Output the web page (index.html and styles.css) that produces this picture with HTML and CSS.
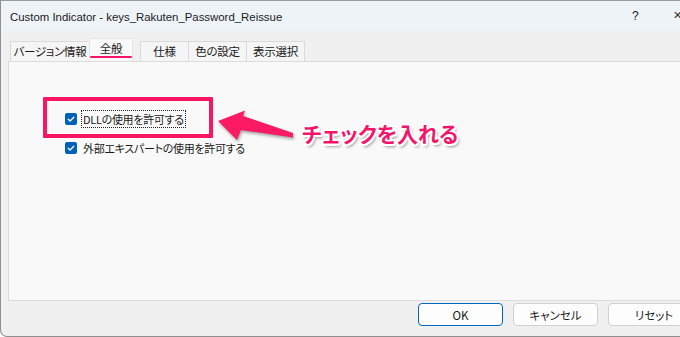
FILE: index.html
```html
<!DOCTYPE html>
<html lang="ja">
<head>
<meta charset="utf-8">
<title>Custom Indicator</title>
<link rel="stylesheet" href="styles.css">
</head>
<body>
<div class="window">
  <div class="titlebar">
    <span class="title">Custom Indicator - keys_Rakuten_Password_Reissue</span>
    <span class="help">?</span>
    <span class="close">✕</span>
  </div>
  <div class="client">
    <div class="tabs">
      <div class="tab t1">バージョン情報</div>
      <div class="tab active">全般<span class="underline"></span></div>
      <div class="tab t3">仕様</div>
      <div class="tab t4">色の設定</div>
      <div class="tab t5">表示選択</div>
    </div>
    <div class="panel">
      <label class="row">
        <span class="box"><svg viewBox="0 0 12 12"><path d="M3.2 6.2 L5.1 8 L8.8 4.2" fill="none" stroke="#fff" stroke-width="1.3" stroke-linecap="round" stroke-linejoin="round"/></svg></span>
        <span class="lbl focus">DLLの使用を許可する</span>
      </label>
      <label class="row">
        <span class="box"><svg viewBox="0 0 12 12"><path d="M3.2 6.2 L5.1 8 L8.8 4.2" fill="none" stroke="#fff" stroke-width="1.3" stroke-linecap="round" stroke-linejoin="round"/></svg></span>
        <span class="lbl">外部エキスパートの使用を許可する</span>
      </label>
    </div>
    <div class="buttons">
      <button class="btn default">OK</button>
      <button class="btn">キャンセル</button>
      <button class="btn">リセット</button>
    </div>
  </div>
  <div class="redbox"></div>
  <svg class="arrow" viewBox="212 104 88 42" width="88" height="42">
    <polygon points="218,121 245,110.5 243,116 293,133 293,137.5 241,130 237,140" fill="#fb1a63"/>
  </svg>
  <div class="note">チェックを入れる</div>
</div>
</body>
</html>
```
FILE: styles.css
```css
html, body {
  margin: 0;
  padding: 0;
  width: 680px;
  height: 337px;
  overflow: hidden;
  background: #ffffff;
}
.window {
  position: relative;
  width: 700px;
  height: 335px;
  border-top: 1px solid #9a9a9a;
  border-left: 1px solid #8f8f8f;
  border-bottom: 1px solid #8f8f8f;
  border-bottom-left-radius: 7px;
  background: #f0f0f0;
  overflow: hidden;
  font-family: "Noto Sans CJK JP", "Noto Sans", sans-serif;
  font-feature-settings: "palt";
  color: #1a1a1a;
}
.titlebar {
  height: 30px;
  background: #eef3f8;
  display: flex;
  align-items: center;
  position: relative;
}
.title {
  font-family: "Liberation Sans", "Noto Sans", sans-serif;
  font-size: 11.4px;
  margin-left: 9px;
  margin-top: 1px;
  color: #1b1b1b;
}
.help {
  position: absolute;
  left: 631px;
  top: 8px;
  font-family: "Liberation Sans", sans-serif;
  font-size: 12px;
}
.close {
  position: absolute;
  left: 672px;
  top: 8px;
  font-family: "DejaVu Sans", sans-serif;
  font-size: 11px;
  color: #333;
}
.client {
  padding-top: 8px;
}
.tabs {
  display: flex;
  align-items: flex-end;
  height: 22px;
  margin-left: 9px;
  position: relative;
  z-index: 1;
}
.tab {
  height: 19px;
  border: 1px solid #dadada;
  border-bottom: none;
  background: #f5f5f5;
  font-size: 11.5px;
  letter-spacing: -0.3px;
  line-height: 19px;
  color: #1a1a1a;
  text-align: center;
  white-space: nowrap;
  margin-right: -1px;
  flex: none;
}
.t1 { width: 78px; }
.tab.active {
  height: 22px;
  line-height: 19px;
  background: #f9f9f9;
  border-color: #e6e6e6;
  width: 42px;
  position: relative;
  margin-right: 7px;
}
.underline {
  position: absolute;
  left: 0;
  top: 17px;
  width: 42px;
  height: 2px;
  border-radius: 1px;
  background: #f5146a;
}
.t3 { width: 47px; }
.t4 { width: 57px; }
.t5 { width: 57px; }
.panel {
  margin-left: 7px;
  height: 240px;
  border: 1px solid #dcdcdc;
  background: #f9f9f9;
  padding: 48px 0 0 56px;
  box-sizing: border-box;
  display: flex;
  flex-direction: column;
  gap: 11px;
}
.row {
  display: flex;
  align-items: center;
  height: 18px;
  gap: 4px;
  font-size: 11px;
  letter-spacing: -0.3px;
}
.box {
  width: 12px;
  height: 12px;
  border-radius: 2px;
  background: #005fb8;
  display: flex;
}
.box svg { width: 12px; height: 12px; }
.lbl {
  line-height: 16px;
  padding: 0 1px;
  border: 1px solid transparent;
}
.lbl.focus {
  border: 1px dotted #222;
}
.buttons {
  display: flex;
  gap: 10px;
  margin: 2px 0 0 417px;
}
.btn {
  width: 85px;
  height: 23px;
  flex: none;
  border: 1px solid #d0d0d0;
  border-radius: 4px;
  background: #fdfdfd;
  font-family: "Noto Sans CJK JP", "Noto Sans", sans-serif;
  font-feature-settings: "palt";
  font-size: 11.5px;
  color: #1a1a1a;
  padding: 0;
}
.btn.default {
  border-color: #0067c0;
}
.btn:nth-child(3) { width: 92px; }
.redbox {
  position: absolute;
  left: 42px;
  top: 96px;
  width: 162px;
  height: 33px;
  border: 4px solid #fb1463;
  border-radius: 1px;
}
.arrow {
  position: absolute;
  left: 211px;
  top: 103px;
  filter: drop-shadow(1px 2px 1.5px rgba(0,0,0,0.35));
}
.note {
  position: absolute;
  left: 301px;
  top: 117px;
  font-family: "Noto Sans CJK JP", sans-serif;
  font-weight: 700;
  font-size: 21px;
  line-height: 30px;
  color: #f5146a;
  text-shadow:
    -1.5px -1.5px 0 #fff, 1.5px -1.5px 0 #fff, -1.5px 1.5px 0 #fff, 1.5px 1.5px 0 #fff,
    0 -2px 0 #fff, 0 2px 0 #fff, -2px 0 0 #fff, 2px 0 0 #fff,
    2px 3px 3px rgba(0,0,0,0.45);
}
```
